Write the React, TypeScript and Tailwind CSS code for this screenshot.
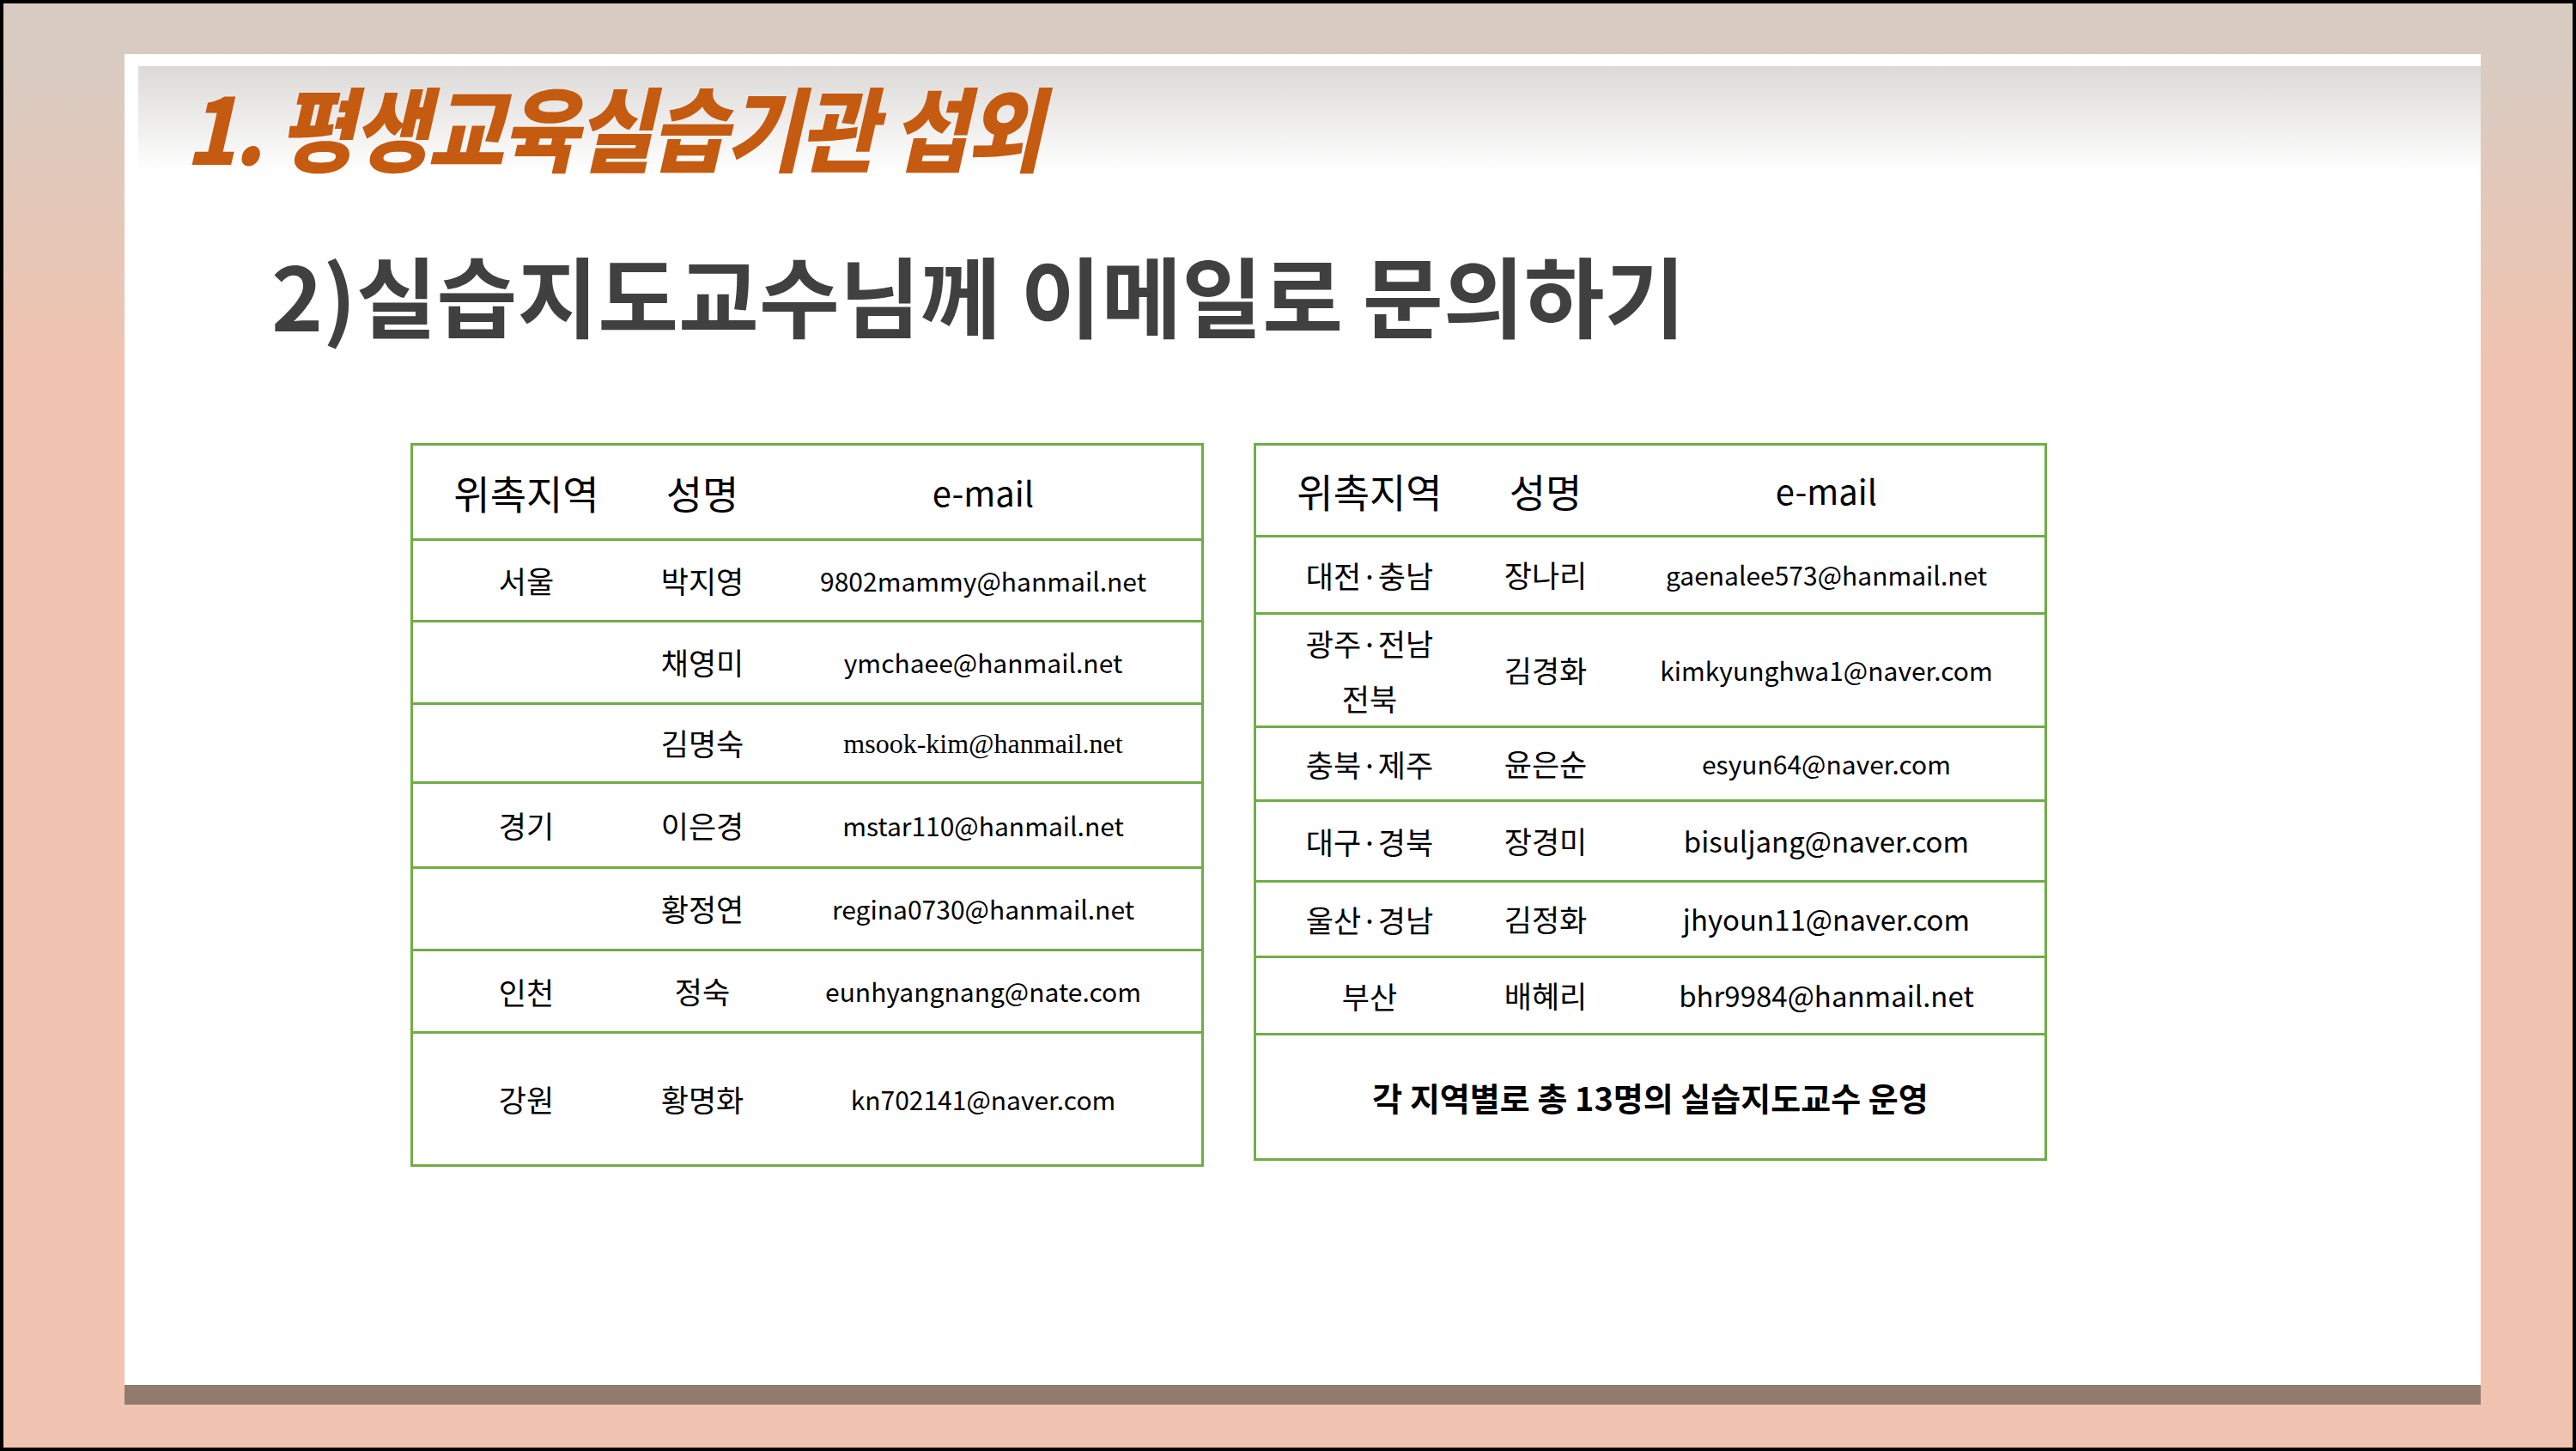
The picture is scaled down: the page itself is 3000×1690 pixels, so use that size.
import React from "react";

const F = { fontFamily: '"Noto Sans CJK KR", "Noto Sans", sans-serif' };

type Row = { h: number; r: React.ReactNode; n: string; e: string; serif?: boolean; big?: boolean };

function Table({ header, rows, footer }: { header: number; rows: Row[]; footer?: number }) {
  return (
    <div className="w-[924px] border-[3px] border-[#70ad47] flex flex-col text-black" style={F}>
      <div className="grid grid-cols-[264px_146px_1fr] items-center text-[46px]" style={{ height: header }}>
        <div className="text-center">위촉지역</div>
        <div className="text-center">성명</div>
        <div className="text-center text-[40px]">e-mail</div>
      </div>
      {rows.map((r, i) => (
        <div key={i} className="grid grid-cols-[264px_146px_1fr] items-center border-t-[3px] border-[#70ad47] text-[35px]" style={{ height: r.h }}>
          <div className="text-center leading-[64px]">{r.r}</div>
          <div className="text-center">{r.n}</div>
          <div className={"text-center " + (r.big ? "text-[33px]" : "text-[30px]")} style={r.serif ? { fontFamily: '"Liberation Serif", "Noto Sans CJK KR", serif', fontSize: 32 } : undefined}>{r.e}</div>
        </div>
      ))}
      {footer && (
        <div className="flex items-center justify-center border-t-[3px] border-[#70ad47] text-[38px] font-bold" style={{ height: footer }}>
          각 지역별로 총 13명의 실습지도교수 운영
        </div>
      )}
    </div>
  );
}

export default function App() {
  const t1: Row[] = [
    { h: 95, r: "서울", n: "박지영", e: "9802mammy@hanmail.net" },
    { h: 96, r: "", n: "채영미", e: "ymchaee@hanmail.net" },
    { h: 92, r: "", n: "김명숙", e: "msook-kim@hanmail.net", serif: true },
    { h: 99, r: "경기", n: "이은경", e: "mstar110@hanmail.net" },
    { h: 96, r: "", n: "황정연", e: "regina0730@hanmail.net" },
    { h: 96, r: "인천", n: "정숙", e: "eunhyangnang@nate.com" },
    { h: 155, r: "강원", n: "황명화", e: "kn702141@naver.com" },
  ];
  const t2: Row[] = [
    { h: 90, r: "대전·충남", n: "장나리", e: "gaenalee573@hanmail.net" },
    { h: 132, r: <>광주·전남<br />전북</>, n: "김경화", e: "kimkyunghwa1@naver.com" },
    { h: 86, r: "충북·제주", n: "윤은순", e: "esyun64@naver.com" },
    { h: 94, r: "대구·경북", n: "장경미", e: "bisuljang@naver.com", big: true },
    { h: 88, r: "울산·경남", n: "김정화", e: "jhyoun11@naver.com", big: true },
    { h: 90, r: "부산", n: "배혜리", e: "bhr9984@hanmail.net", big: true },
  ];
  return (
    <div className="w-[3000px] h-[1690px] bg-black p-[4px]">
      <div className="w-full h-full bg-gradient-to-b from-[#d8ccc2] from-[3%] to-[#f0c4b0] to-[25%] pl-[141px] pt-[59px] pr-[107px]">
        <div className="bg-white h-[1573px] flex flex-col">
          <div className="h-[14px]" />
          <div className="ml-[16px] h-[124px] bg-gradient-to-b from-[#dcdad8] to-white flex items-center pl-[55px] pt-[12px]">
            <span className="text-[97px] font-black italic text-[#c55a11] leading-none tracking-tight scale-y-110" style={F}>1. 평생교육실습기관 섭외</span>
          </div>
          <div className="pl-[171px] mt-[46px] h-[190px] flex items-center">
            <span className="text-[102px] font-bold text-[#404040] leading-none" style={F}>2)실습지도교수님께 이메일로 문의하기</span>
          </div>
          <div className="flex gap-[58px] pl-[333px] mt-[79px] items-start">
            <Table header={108} rows={t1} />
            <Table header={104} rows={t2} footer={146} />
          </div>
          <div className="flex-1" />
          <div className="h-[23px] bg-[#927a6e]" />
        </div>
      </div>
    </div>
  );
}
